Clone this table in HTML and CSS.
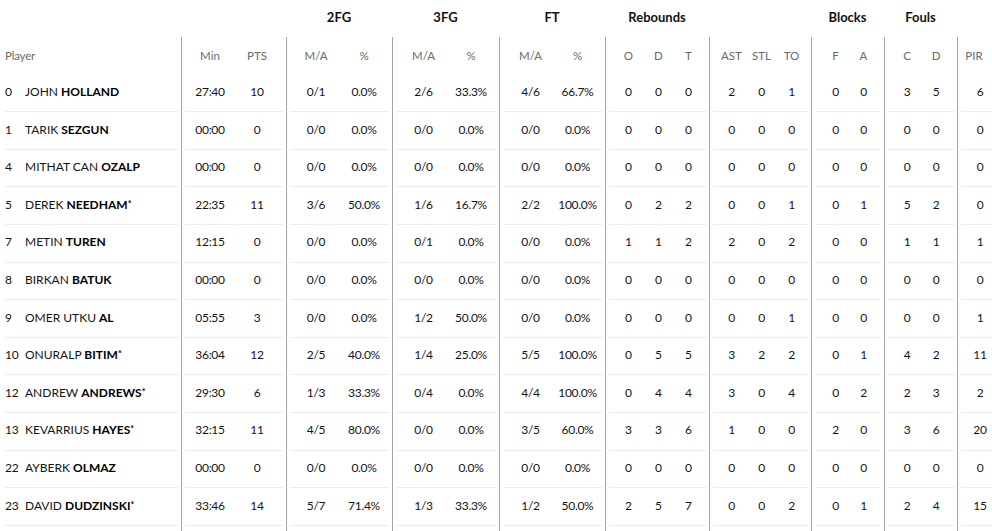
FILE: index.html
```html
<!DOCTYPE html>
<html lang="en">
<head>
<meta charset="utf-8">
<title>Box score</title>
<link rel="stylesheet" href="styles.css">
</head>
<body>
<div class="wrap">
<div class="table">
  <div class="row titles">
    <div class="t"></div>
    <div class="t"></div>
    <div class="t">2FG</div>
    <div class="t">3FG</div>
    <div class="t">FT</div>
    <div class="t">Rebounds</div>
    <div class="t"></div>
    <div class="t">Blocks</div>
    <div class="t">Fouls</div>
    <div class="t"></div>
  </div>

  <div class="row head">
    <div class="g gp"><div class="gi"><span class="plabel">Player</span></div></div>
    <div class="g"><div class="gi g-min"><span>Min</span><span>PTS</span></div></div>
    <div class="g"><div class="gi g-2fg"><span>M/A</span><span>%</span></div></div>
    <div class="g"><div class="gi g-3fg"><span>M/A</span><span>%</span></div></div>
    <div class="g"><div class="gi g-ft"><span>M/A</span><span>%</span></div></div>
    <div class="g"><div class="gi g-reb"><span>O</span><span>D</span><span>T</span></div></div>
    <div class="g"><div class="gi g-ast"><span>AST</span><span>STL</span><span>TO</span></div></div>
    <div class="g"><div class="gi g-blk"><span>F</span><span>A</span></div></div>
    <div class="g"><div class="gi g-fls"><span>C</span><span>D</span></div></div>
    <div class="g"><div class="gi g-pir"><span class="pirh">PIR</span></div></div>
  </div>

  <div class="row data">
    <div class="g gp"><div class="gi"><span class="num">0</span><span class="nm">JOHN <b>HOLLAND</b></span></div></div>
    <div class="g"><div class="gi g-min"><span>27:40</span><span>10</span></div></div>
    <div class="g"><div class="gi g-2fg"><span>0/1</span><span>0.0%</span></div></div>
    <div class="g"><div class="gi g-3fg"><span>2/6</span><span>33.3%</span></div></div>
    <div class="g"><div class="gi g-ft"><span>4/6</span><span>66.7%</span></div></div>
    <div class="g"><div class="gi g-reb"><span>0</span><span>0</span><span>0</span></div></div>
    <div class="g"><div class="gi g-ast"><span>2</span><span>0</span><span>1</span></div></div>
    <div class="g"><div class="gi g-blk"><span>0</span><span>0</span></div></div>
    <div class="g"><div class="gi g-fls"><span>3</span><span>5</span></div></div>
    <div class="g"><div class="gi g-pir"><span>6</span></div></div>
  </div>

  <div class="row data">
    <div class="g gp"><div class="gi"><span class="num">1</span><span class="nm">TARIK <b>SEZGUN</b></span></div></div>
    <div class="g"><div class="gi g-min"><span>00:00</span><span>0</span></div></div>
    <div class="g"><div class="gi g-2fg"><span>0/0</span><span>0.0%</span></div></div>
    <div class="g"><div class="gi g-3fg"><span>0/0</span><span>0.0%</span></div></div>
    <div class="g"><div class="gi g-ft"><span>0/0</span><span>0.0%</span></div></div>
    <div class="g"><div class="gi g-reb"><span>0</span><span>0</span><span>0</span></div></div>
    <div class="g"><div class="gi g-ast"><span>0</span><span>0</span><span>0</span></div></div>
    <div class="g"><div class="gi g-blk"><span>0</span><span>0</span></div></div>
    <div class="g"><div class="gi g-fls"><span>0</span><span>0</span></div></div>
    <div class="g"><div class="gi g-pir"><span>0</span></div></div>
  </div>

  <div class="row data">
    <div class="g gp"><div class="gi"><span class="num">4</span><span class="nm">MITHAT CAN <b>OZALP</b></span></div></div>
    <div class="g"><div class="gi g-min"><span>00:00</span><span>0</span></div></div>
    <div class="g"><div class="gi g-2fg"><span>0/0</span><span>0.0%</span></div></div>
    <div class="g"><div class="gi g-3fg"><span>0/0</span><span>0.0%</span></div></div>
    <div class="g"><div class="gi g-ft"><span>0/0</span><span>0.0%</span></div></div>
    <div class="g"><div class="gi g-reb"><span>0</span><span>0</span><span>0</span></div></div>
    <div class="g"><div class="gi g-ast"><span>0</span><span>0</span><span>0</span></div></div>
    <div class="g"><div class="gi g-blk"><span>0</span><span>0</span></div></div>
    <div class="g"><div class="gi g-fls"><span>0</span><span>0</span></div></div>
    <div class="g"><div class="gi g-pir"><span>0</span></div></div>
  </div>

  <div class="row data">
    <div class="g gp"><div class="gi"><span class="num">5</span><span class="nm">DEREK <b>NEEDHAM<sup>*</sup></b></span></div></div>
    <div class="g"><div class="gi g-min"><span>22:35</span><span>11</span></div></div>
    <div class="g"><div class="gi g-2fg"><span>3/6</span><span>50.0%</span></div></div>
    <div class="g"><div class="gi g-3fg"><span>1/6</span><span>16.7%</span></div></div>
    <div class="g"><div class="gi g-ft"><span>2/2</span><span>100.0%</span></div></div>
    <div class="g"><div class="gi g-reb"><span>0</span><span>2</span><span>2</span></div></div>
    <div class="g"><div class="gi g-ast"><span>0</span><span>0</span><span>1</span></div></div>
    <div class="g"><div class="gi g-blk"><span>0</span><span>1</span></div></div>
    <div class="g"><div class="gi g-fls"><span>5</span><span>2</span></div></div>
    <div class="g"><div class="gi g-pir"><span>0</span></div></div>
  </div>

  <div class="row data">
    <div class="g gp"><div class="gi"><span class="num">7</span><span class="nm">METIN <b>TUREN</b></span></div></div>
    <div class="g"><div class="gi g-min"><span>12:15</span><span>0</span></div></div>
    <div class="g"><div class="gi g-2fg"><span>0/0</span><span>0.0%</span></div></div>
    <div class="g"><div class="gi g-3fg"><span>0/1</span><span>0.0%</span></div></div>
    <div class="g"><div class="gi g-ft"><span>0/0</span><span>0.0%</span></div></div>
    <div class="g"><div class="gi g-reb"><span>1</span><span>1</span><span>2</span></div></div>
    <div class="g"><div class="gi g-ast"><span>2</span><span>0</span><span>2</span></div></div>
    <div class="g"><div class="gi g-blk"><span>0</span><span>0</span></div></div>
    <div class="g"><div class="gi g-fls"><span>1</span><span>1</span></div></div>
    <div class="g"><div class="gi g-pir"><span>1</span></div></div>
  </div>

  <div class="row data">
    <div class="g gp"><div class="gi"><span class="num">8</span><span class="nm">BIRKAN <b>BATUK</b></span></div></div>
    <div class="g"><div class="gi g-min"><span>00:00</span><span>0</span></div></div>
    <div class="g"><div class="gi g-2fg"><span>0/0</span><span>0.0%</span></div></div>
    <div class="g"><div class="gi g-3fg"><span>0/0</span><span>0.0%</span></div></div>
    <div class="g"><div class="gi g-ft"><span>0/0</span><span>0.0%</span></div></div>
    <div class="g"><div class="gi g-reb"><span>0</span><span>0</span><span>0</span></div></div>
    <div class="g"><div class="gi g-ast"><span>0</span><span>0</span><span>0</span></div></div>
    <div class="g"><div class="gi g-blk"><span>0</span><span>0</span></div></div>
    <div class="g"><div class="gi g-fls"><span>0</span><span>0</span></div></div>
    <div class="g"><div class="gi g-pir"><span>0</span></div></div>
  </div>

  <div class="row data">
    <div class="g gp"><div class="gi"><span class="num">9</span><span class="nm">OMER UTKU <b>AL</b></span></div></div>
    <div class="g"><div class="gi g-min"><span>05:55</span><span>3</span></div></div>
    <div class="g"><div class="gi g-2fg"><span>0/0</span><span>0.0%</span></div></div>
    <div class="g"><div class="gi g-3fg"><span>1/2</span><span>50.0%</span></div></div>
    <div class="g"><div class="gi g-ft"><span>0/0</span><span>0.0%</span></div></div>
    <div class="g"><div class="gi g-reb"><span>0</span><span>0</span><span>0</span></div></div>
    <div class="g"><div class="gi g-ast"><span>0</span><span>0</span><span>1</span></div></div>
    <div class="g"><div class="gi g-blk"><span>0</span><span>0</span></div></div>
    <div class="g"><div class="gi g-fls"><span>0</span><span>0</span></div></div>
    <div class="g"><div class="gi g-pir"><span>1</span></div></div>
  </div>

  <div class="row data">
    <div class="g gp"><div class="gi"><span class="num">10</span><span class="nm">ONURALP <b>BITIM<sup>*</sup></b></span></div></div>
    <div class="g"><div class="gi g-min"><span>36:04</span><span>12</span></div></div>
    <div class="g"><div class="gi g-2fg"><span>2/5</span><span>40.0%</span></div></div>
    <div class="g"><div class="gi g-3fg"><span>1/4</span><span>25.0%</span></div></div>
    <div class="g"><div class="gi g-ft"><span>5/5</span><span>100.0%</span></div></div>
    <div class="g"><div class="gi g-reb"><span>0</span><span>5</span><span>5</span></div></div>
    <div class="g"><div class="gi g-ast"><span>3</span><span>2</span><span>2</span></div></div>
    <div class="g"><div class="gi g-blk"><span>0</span><span>1</span></div></div>
    <div class="g"><div class="gi g-fls"><span>4</span><span>2</span></div></div>
    <div class="g"><div class="gi g-pir"><span>11</span></div></div>
  </div>

  <div class="row data">
    <div class="g gp"><div class="gi"><span class="num">12</span><span class="nm">ANDREW <b>ANDREWS<sup>*</sup></b></span></div></div>
    <div class="g"><div class="gi g-min"><span>29:30</span><span>6</span></div></div>
    <div class="g"><div class="gi g-2fg"><span>1/3</span><span>33.3%</span></div></div>
    <div class="g"><div class="gi g-3fg"><span>0/4</span><span>0.0%</span></div></div>
    <div class="g"><div class="gi g-ft"><span>4/4</span><span>100.0%</span></div></div>
    <div class="g"><div class="gi g-reb"><span>0</span><span>4</span><span>4</span></div></div>
    <div class="g"><div class="gi g-ast"><span>3</span><span>0</span><span>4</span></div></div>
    <div class="g"><div class="gi g-blk"><span>0</span><span>2</span></div></div>
    <div class="g"><div class="gi g-fls"><span>2</span><span>3</span></div></div>
    <div class="g"><div class="gi g-pir"><span>2</span></div></div>
  </div>

  <div class="row data">
    <div class="g gp"><div class="gi"><span class="num">13</span><span class="nm">KEVARRIUS <b>HAYES<sup>*</sup></b></span></div></div>
    <div class="g"><div class="gi g-min"><span>32:15</span><span>11</span></div></div>
    <div class="g"><div class="gi g-2fg"><span>4/5</span><span>80.0%</span></div></div>
    <div class="g"><div class="gi g-3fg"><span>0/0</span><span>0.0%</span></div></div>
    <div class="g"><div class="gi g-ft"><span>3/5</span><span>60.0%</span></div></div>
    <div class="g"><div class="gi g-reb"><span>3</span><span>3</span><span>6</span></div></div>
    <div class="g"><div class="gi g-ast"><span>1</span><span>0</span><span>0</span></div></div>
    <div class="g"><div class="gi g-blk"><span>2</span><span>0</span></div></div>
    <div class="g"><div class="gi g-fls"><span>3</span><span>6</span></div></div>
    <div class="g"><div class="gi g-pir"><span>20</span></div></div>
  </div>

  <div class="row data">
    <div class="g gp"><div class="gi"><span class="num">22</span><span class="nm">AYBERK <b>OLMAZ</b></span></div></div>
    <div class="g"><div class="gi g-min"><span>00:00</span><span>0</span></div></div>
    <div class="g"><div class="gi g-2fg"><span>0/0</span><span>0.0%</span></div></div>
    <div class="g"><div class="gi g-3fg"><span>0/0</span><span>0.0%</span></div></div>
    <div class="g"><div class="gi g-ft"><span>0/0</span><span>0.0%</span></div></div>
    <div class="g"><div class="gi g-reb"><span>0</span><span>0</span><span>0</span></div></div>
    <div class="g"><div class="gi g-ast"><span>0</span><span>0</span><span>0</span></div></div>
    <div class="g"><div class="gi g-blk"><span>0</span><span>0</span></div></div>
    <div class="g"><div class="gi g-fls"><span>0</span><span>0</span></div></div>
    <div class="g"><div class="gi g-pir"><span>0</span></div></div>
  </div>

  <div class="row data">
    <div class="g gp"><div class="gi"><span class="num">23</span><span class="nm">DAVID <b>DUDZINSKI<sup>*</sup></b></span></div></div>
    <div class="g"><div class="gi g-min"><span>33:46</span><span>14</span></div></div>
    <div class="g"><div class="gi g-2fg"><span>5/7</span><span>71.4%</span></div></div>
    <div class="g"><div class="gi g-3fg"><span>1/3</span><span>33.3%</span></div></div>
    <div class="g"><div class="gi g-ft"><span>1/2</span><span>50.0%</span></div></div>
    <div class="g"><div class="gi g-reb"><span>2</span><span>5</span><span>7</span></div></div>
    <div class="g"><div class="gi g-ast"><span>0</span><span>0</span><span>2</span></div></div>
    <div class="g"><div class="gi g-blk"><span>0</span><span>1</span></div></div>
    <div class="g"><div class="gi g-fls"><span>2</span><span>4</span></div></div>
    <div class="g"><div class="gi g-pir"><span>15</span></div></div>
  </div>

  <div class="row data">
    <div class="g gp"><div class="gi"></div></div>
    <div class="g"><div class="gi"></div></div>
    <div class="g"><div class="gi"></div></div>
    <div class="g"><div class="gi"></div></div>
    <div class="g"><div class="gi"></div></div>
    <div class="g"><div class="gi"></div></div>
    <div class="g"><div class="gi"></div></div>
    <div class="g"><div class="gi"></div></div>
    <div class="g"><div class="gi"></div></div>
    <div class="g"><div class="gi"></div></div>
  </div>
</div>
</div>
</body>
</html>
```

FILE: styles.css
```css
html, body {
  margin: 0;
  padding: 0;
  background: #ffffff;
}
body {
  font-family: Lato, "Noto Sans", sans-serif;
  color: #141414;
  overflow: hidden;
}
.wrap {
  width: 992px;
  height: 531px;
  overflow: hidden;
}
.table {
  width: 1010px;
}
.row {
  display: grid;
  grid-template-columns: 181px 105px 106px 107px 106px 104px 102px 73px 73px 53px;
}
.titles {
  height: 37px;
}
.t {
  display: flex;
  align-items: center;
  justify-content: center;
  padding-bottom: 4px;
  box-sizing: border-box;
  font-size: 13px;
  font-weight: 700;
  color: #111111;
}
.g {
  border-left: 1px solid #a3a3a3;
}
.g.gp {
  border-left: 0;
}
.gi {
  display: grid;
  grid-auto-flow: column;
  align-items: center;
  justify-items: center;
  justify-content: start;
  box-sizing: border-box;
  margin: 0 3px;
}
.gp .gi {
  display: flex;
  margin: 0 3px 0 5px;
}
.head .gi {
  height: 37.7px;
  font-size: 11.5px;
  color: #6a6a6a;
}
.data .gi {
  height: 37.6px;
  border-bottom: 1px solid #ececec;
  padding-bottom: 3px;
  font-size: 12px;
  letter-spacing: -0.3px;
}
.plabel {
  font-size: 11.5px;
  letter-spacing: -0.2px;
}
.num {
  width: 20px;
  font-size: 12px;
}
.nm {
  font-size: 12px;
  letter-spacing: 0;
  color: #141414;
}
.nm b {
  font-weight: 700;
  color: #000000;
}
.nm sup {
  font-size: 9px;
  vertical-align: 0;
  position: relative;
  top: -2px;
}
.g-min { grid-template-columns: 50px 44px; }
.g-2fg { grid-template-columns: 52px 44px; }
.g-3fg { grid-template-columns: 55px 40px; }
.g-ft  { grid-template-columns: 55px 39px; }
.g-reb { grid-template-columns: repeat(3, 30px); padding-left: 4.3px; }
.g-ast { grid-template-columns: repeat(3, 30px); padding-left: 3.5px; }
.g-blk { grid-template-columns: repeat(2, 28px); padding-left: 6.5px; }
.g-fls { grid-template-columns: repeat(2, 29px); padding-left: 4.5px; }
.g-pir { grid-template-columns: 38px; }
.pirh {
  padding-right: 12px;
}
```
